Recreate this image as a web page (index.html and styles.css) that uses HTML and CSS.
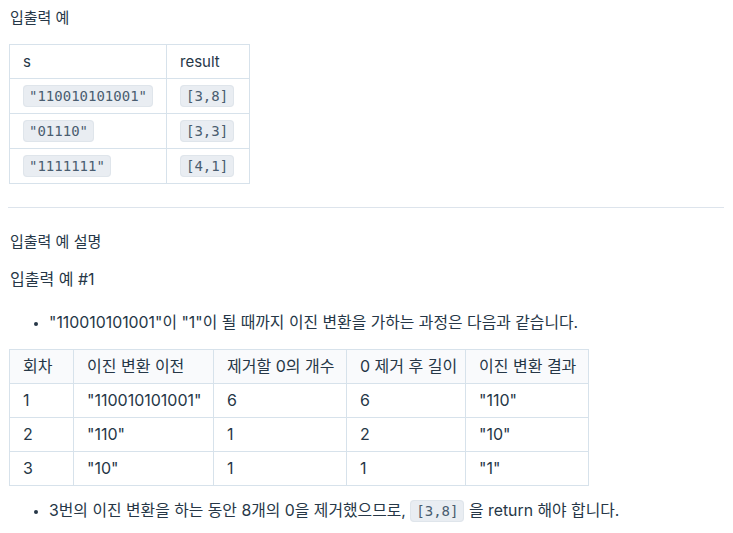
FILE: index.html
```html
<!DOCTYPE html>
<html lang="ko">
<head>
<meta charset="utf-8">
<link rel="stylesheet" href="styles.css">
</head>
<body>
<p class="title">입출력 예</p>
<table class="tbl tbl-io">
  <colgroup><col class="c-s"><col class="c-r"></colgroup>
  <thead><tr><th>s</th><th>result</th></tr></thead>
  <tbody>
    <tr><td><code>"110010101001"</code></td><td><code>[3,8]</code></td></tr>
    <tr><td><code>"01110"</code></td><td><code>[3,3]</code></td></tr>
    <tr><td><code>"1111111"</code></td><td><code>[4,1]</code></td></tr>
  </tbody>
</table>
<hr class="sep">
<h5 class="sub">입출력 예 설명</h5>
<p class="case">입출력 예 #1</p>
<ul class="list first">
  <li>"110010101001"이 "1"이 될 때까지 이진 변환을 가하는 과정은 다음과 같습니다.</li>
</ul>
<table class="tbl tbl-steps">
  <colgroup><col class="c1"><col class="c2"><col class="c3"><col class="c4"><col class="c5"></colgroup>
  <thead><tr><th>회차</th><th>이진 변환 이전</th><th>제거할 0의 개수</th><th>0 제거 후 길이</th><th>이진 변환 결과</th></tr></thead>
  <tbody>
    <tr><td>1</td><td>"110010101001"</td><td>6</td><td>6</td><td>"110"</td></tr>
    <tr><td>2</td><td>"110"</td><td>1</td><td>2</td><td>"10"</td></tr>
    <tr><td>3</td><td>"10"</td><td>1</td><td>1</td><td>"1"</td></tr>
  </tbody>
</table>
<ul class="list last">
  <li>3번의 이진 변환을 하는 동안 8개의 0을 제거했으므로, <code>[3,8]</code> 을 return 해야 합니다.</li>
</ul>
</body>
</html>
```
FILE: styles.css
```css
html, body {
  background: #ffffff;
}
body {
  margin: 0;
  padding: 6px 9px 0 9px;
  font-family: "Inter", "Noto Sans CJK KR", sans-serif;
  font-size: 16px;
  line-height: 24px;
  color: #263747;
}
p, h5 {
  margin: 0;
  font-weight: 400;
  font-size: 15px;
}
.title {
  padding-left: 1px;
}
.tbl {
  border-collapse: collapse;
  margin-top: 14px;
  table-layout: fixed;
}
.tbl-io {
  width: 240px;
  font-size: 15px;
}
.tbl-io .c-s { width: 157px; }
.tbl-io .c-r { width: 83px; }
.tbl-steps {
  width: 579px;
}
.tbl-steps .c1 { width: 64px; }
.tbl-steps .c2 { width: 140px; }
.tbl-steps .c3 { width: 133px; }
.tbl-steps .c4 { width: 119px; }
.tbl-steps .c5 { width: 123px; }
.tbl th, .tbl td {
  border: 1px solid #d7e2eb;
  padding: 5px 13px 5px 13px;
  text-align: left;
  font-weight: 400;
  white-space: nowrap;
  height: 23px;
  line-height: 23px;
  box-sizing: content-box;
}
.tbl-steps thead th {
  background: #f9fafc;
}
code {
  font-family: "DejaVu Sans Mono", monospace;
  font-size: 14px;
  padding: 2px 5px;
  background: #e9edf2;
  border: 1px solid #dfe5eb;
  border-radius: 4px;
  color: #4a5d70;
}
.sep {
  margin: 23px 0 0 -1px;
  border: 0;
  border-top: 1px solid #dde4ec;
}
.sub {
  margin-top: 22px;
  padding-left: 1px;
}
.case {
  margin-top: 13px;
  padding-left: 1px;
  font-size: 16px;
}
.list {
  margin: 20px 0 0 0;
  padding-left: 40px;
  font-size: 15.85px;
}
.list li::marker {
  font-size: 12px;
}
.tbl-steps {
  margin-top: 14px;
}
.list.last {
  margin-top: 13px;
}
```
